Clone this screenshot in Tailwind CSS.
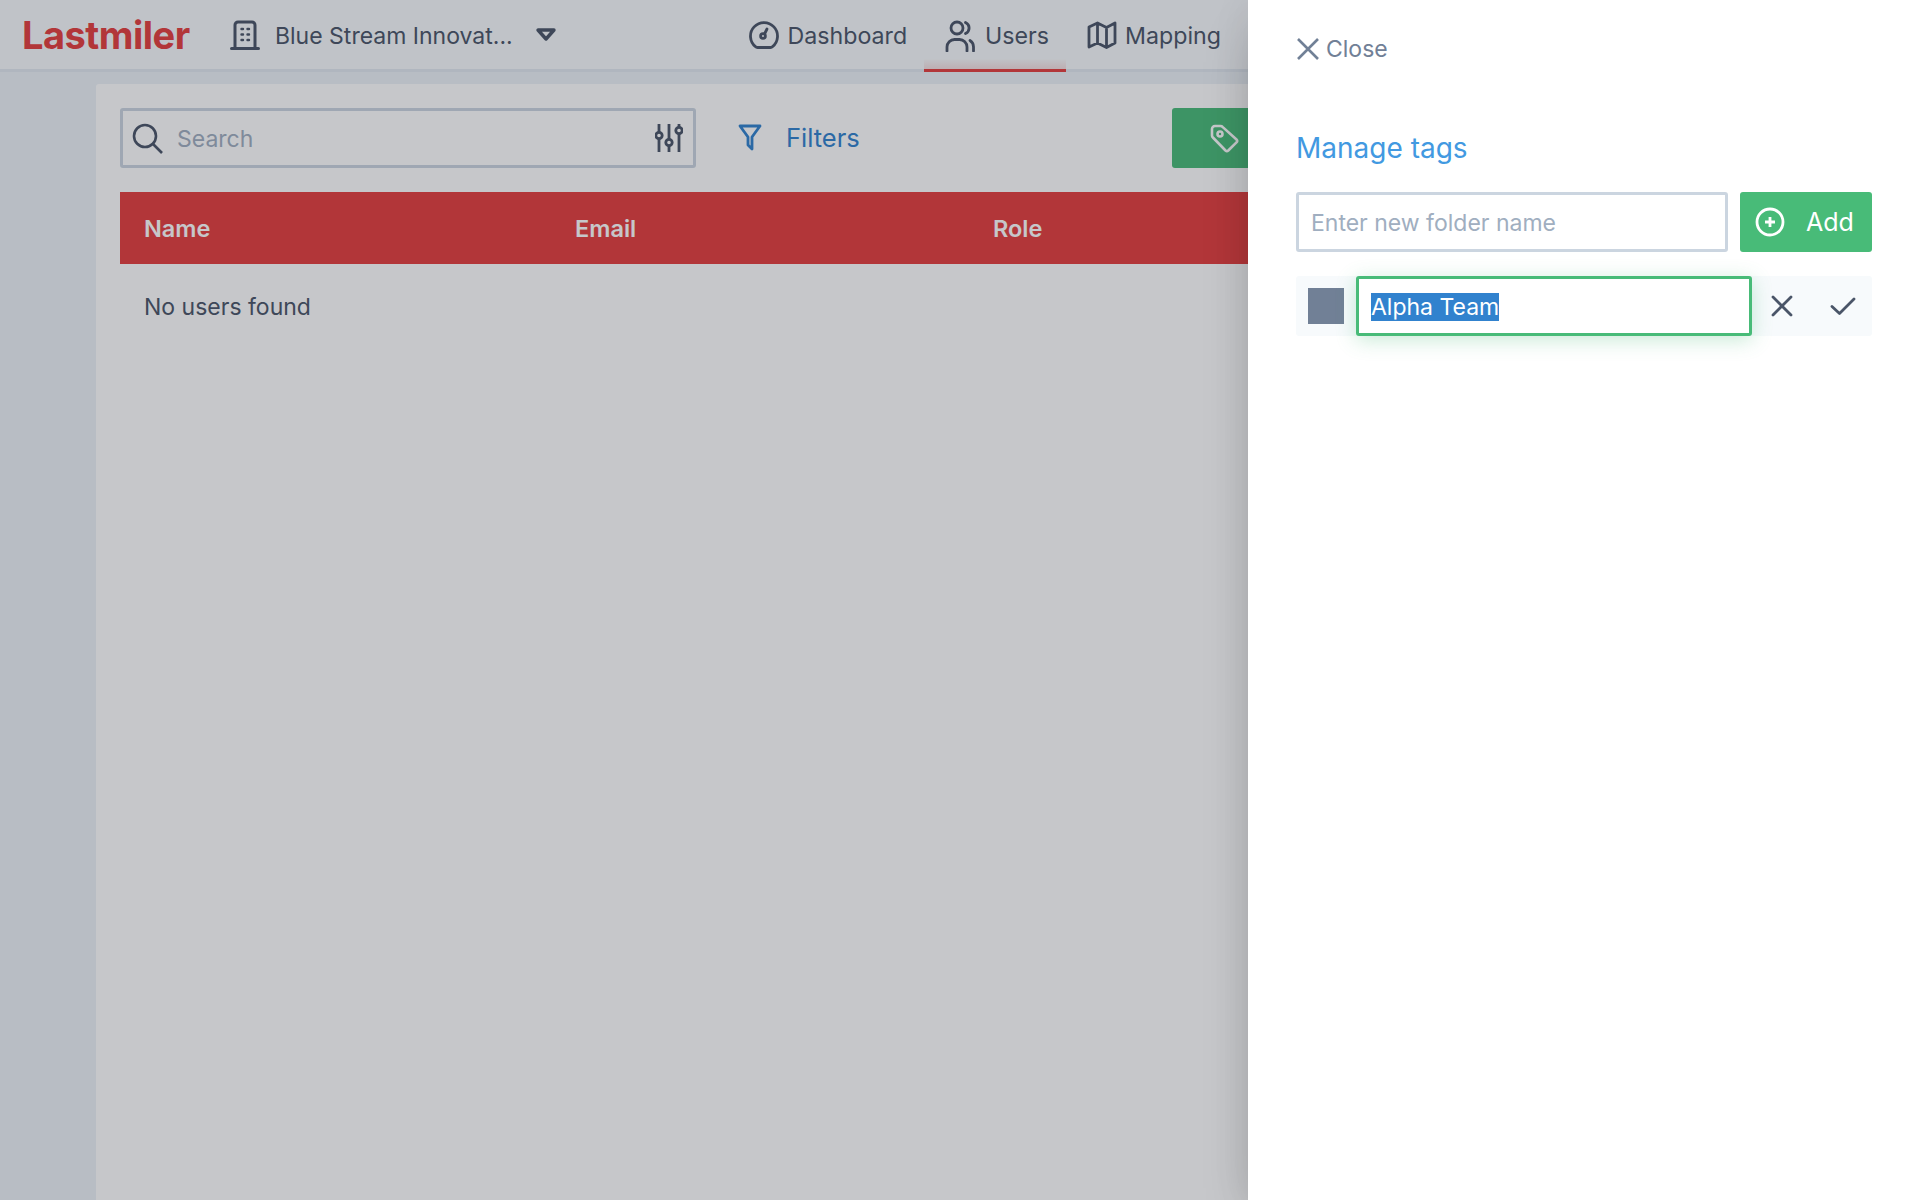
<!DOCTYPE html>
<html>
<head>
<meta charset="utf-8">
<script src="https://cdn.jsdelivr.net/npm/@tailwindcss/browser@4"></script>
</head>
<body class="font-['Inter',sans-serif] bg-[#edf2f7] text-[#4a5568] h-[1200px] overflow-hidden relative">
  <header class="h-[72px] bg-[#f7fafc] border-b-[3px] border-[#e2e8f0] flex items-center pl-[22px] pr-[27px] w-[1248px]">
    <span class="font-bold text-[38px] tracking-[-0.5px] text-[#e53e3e] w-[169px] leading-none whitespace-nowrap">Lastmiler</span>
    <svg class="ml-[39px]" width="30" height="30" viewBox="0 0 30 30" fill="none" stroke="#4a5568" stroke-width="3" stroke-linecap="round"><path d="M1.5 28.5h27M5 28V5a3 3 0 0 1 3-3h14a3 3 0 0 1 3 3v23"/><path d="M11.5 9h1.5M17.5 9h1.5M11.5 14.5h1.5M17.5 14.5h1.5M11.5 20h1.5M17.5 20h1.5" stroke-width="2.4"/></svg>
    <span class="ml-[15px] mt-[3px] text-[23px] leading-none whitespace-nowrap">Blue Stream Innovat...</span>
    <svg class="ml-[22px]" width="22" height="16" viewBox="0 0 22 16" fill="none" stroke="#4a5568" stroke-width="3.4" stroke-linejoin="round"><path d="M3 3h16l-8 9z"/></svg>
    <nav class="ml-auto flex items-center h-[69px] text-[23.2px]">
      <a class="flex items-center gap-[9px] pr-[17px] pt-[2px]">
        <svg width="30" height="28" viewBox="0 0 30 28" fill="none" stroke="#4a5568" stroke-width="2.8" stroke-linejoin="round"><path d="M8.5 26.5h13c.8 0 1.5-.3 2-.9A13.5 13.5 0 1 0 6.5 25.6c.5.6 1.2.9 2 .9z"/><circle cx="14" cy="15" r="2.4"/><path d="M15.5 13l2.5-5" stroke-linecap="round"/></svg>
        <span class="mt-[1px]">Dashboard</span>
      </a>
      <a class="self-start flex items-center gap-[10px] h-[72px] pl-[21px] pr-[17px] pt-[2px] border-b-[3px] border-[#e53e3e] bg-gradient-to-t from-[#e53e3e]/15 to-transparent to-15%">
        <svg width="30" height="32" viewBox="0 0 30 32" fill="none" stroke="#4a5568" stroke-width="2.8" stroke-linecap="round"><circle cx="12" cy="8" r="6"/><path d="M2 31v-4a7.500 7.500 0 0 1 7.500-7.500h5A7.500 7.500 0 0 1 22 27v4M20.500 2.500a6 6 0 0 1 0 11M25 20.500a7.500 7.500 0 0 1 3.500 6.500v4"/></svg>
        <span class="mt-[1px]">Users</span>
      </a>
      <a class="flex items-center gap-[8px] pl-[21px] pt-[2px]">
        <svg width="30" height="28" viewBox="0 0 30 28" fill="none" stroke="#4a5568" stroke-width="2.8" stroke-linejoin="round"><path d="M2 6l8.500-4 9 4.500L28 2v20l-8.500 4.500-9-4.500L2 26zM10.500 2v20M19.500 6.500v20"/></svg>
        <span class="mt-[1px]">Mapping</span>
      </a>
    </nav>
  </header>
  <main class="ml-[96px] mt-[12px] w-[1728px] h-[1116px] bg-white rounded-t-[3px] px-[24px] pt-[24px]">
    <div class="flex items-center h-[60px]">
      <div class="w-[576px] h-[60px] border-[3px] border-[#cbd5e0] rounded-[3px] flex items-center pl-[8px] pr-[10px]">
        <svg width="32" height="32" viewBox="0 0 32 32" fill="none" stroke="#4a5568" stroke-width="2.6"><circle cx="14" cy="14" r="11"/><path d="M22 22l9 9"/></svg>
        <span class="ml-[14px] mt-[2px] text-[23px] text-[#a0aec0]">Search</span>
        <svg class="ml-auto" width="28" height="30" viewBox="0 0 28 30" fill="none" stroke="#4a5568" stroke-width="2.8"><path d="M4 1v8M4 16v13M14 1v15M14 23v6M24 1v3M24 11v18"/><circle cx="4" cy="12.500" r="3.200"/><circle cx="14" cy="19.500" r="3.200"/><circle cx="24" cy="7.500" r="3.200"/></svg>
      </div>
      <svg class="ml-[42px]" width="24" height="28" viewBox="0 0 24 28" fill="none" stroke="#3182ce" stroke-width="2.8" stroke-linejoin="round"><path d="M2 2h20l-8 11v12l-4-4v-8z"/></svg>
      <span class="ml-[24px] mt-[1px] text-[25.500px] text-[#3182ce]">Filters</span>
      <div class="ml-[312px] w-[200px] h-[60px] bg-[#48bb78] rounded-[3px] pl-[38px] flex items-center">
        <svg width="29" height="29" viewBox="0 0 29 29" fill="none" stroke="#fff" stroke-width="2.600" stroke-linejoin="round"><path d="M2 5a3 3 0 0 1 3-3h5.500c.8 0 1.500.3 2 .9L26.500 15.500a2 2 0 0 1 0 2.800L18.300 26.500a2 2 0 0 1-2.800 0L2.900 13.500c-.6-.5-.9-1.200-.9-2z"/><circle cx="10" cy="10" r="2.500"/></svg>
      </div>
    </div>
    <div class="mt-[24px] h-[72px] bg-[#e53e3e] flex items-center text-white font-semibold text-[23.500px] pl-[24px] pt-[1px]">
      <span class="w-[431px]">Name</span><span class="w-[418px]">Email</span><span>Role</span>
    </div>
    <div class="pl-[24px] pt-[26px] text-[23px]">No users found</div>
  </main>
  <div class="absolute inset-0 bg-[#1a202c]/25"></div>
  <aside class="absolute top-0 right-0 w-[672px] h-[1200px] bg-white shadow-[0_25px_50px_-12px_rgba(0,0,0,0.25),0_0_40px_rgba(0,0,0,0.06)] pl-[48px] pr-[48px]">
    <div class="flex items-center pt-[37px] h-[60px] text-[#718096] text-[23px] leading-none">
      <svg width="24" height="24" viewBox="0 0 24 24" fill="none" stroke="#718096" stroke-width="2.600"><path d="M2 2l20 20M22 2L2 22"/></svg>
      <span class="ml-[6px] mt-[2px]">Close</span>
    </div>
    <h2 class="mt-[70px] text-[28px] leading-[36px] text-[#4299e1]">Manage tags</h2>
    <div class="mt-[26px] flex gap-[12px]">
      <div class="w-[432px] h-[60px] border-[3px] border-[#cbd5e0] rounded-[3px] flex items-center pl-[12px] pt-[2px] text-[23px] text-[#a0aec0]">Enter new folder name</div>
      <div class="w-[132px] h-[60px] bg-[#48bb78] rounded-[3px] flex items-center pl-[15px] gap-[21px] text-white text-[25px]">
        <svg width="30" height="30" viewBox="0 0 30 30" fill="none" stroke="#fff" stroke-width="2.800"><circle cx="15" cy="15" r="13"/><path d="M15 10v10M10 15h10"/></svg>
        <span class="mt-[2px]">Add</span>
      </div>
    </div>
    <div class="mt-[24px] w-[576px] h-[60px] bg-[#f7fafc] rounded-[3px] flex items-center pl-[12px]">
      <div class="w-[36px] h-[36px] bg-[#718096]"></div>
      <div class="ml-[12px] w-[396px] h-[60px] bg-white border-[3px] border-[#48bb78] rounded-[3px] shadow-[0_4px_20px_rgba(72,187,120,0.3)] flex items-center pl-[12px] text-[23px] text-white"><span class="bg-[#3182ce] leading-[28px] mt-[1px]">Alpha Team</span></div>
      <svg class="ml-[19px]" width="22" height="22" viewBox="0 0 22 22" fill="none" stroke="#4a5568" stroke-width="2.800" stroke-linecap="round"><path d="M2 2l18 18M20 2L2 20"/></svg>
      <svg class="ml-[37px]" width="26" height="18" viewBox="0 0 26 18" fill="none" stroke="#4a5568" stroke-width="2.800" stroke-linecap="round" stroke-linejoin="round"><path d="M2 9.500l7.500 7L24 2"/></svg>
    </div>
  </aside>
</body>
</html>
